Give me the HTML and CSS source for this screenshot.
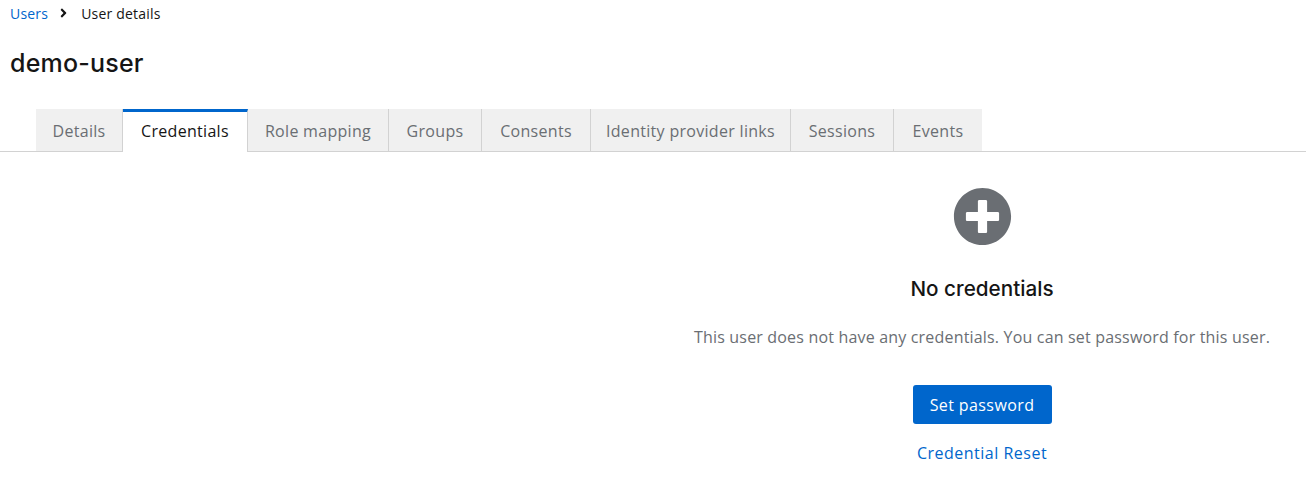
FILE: index.html
```html
<!DOCTYPE html>
<html lang="en">
<head>
<meta charset="utf-8">
<title>demo-user</title>
<link rel="stylesheet" href="styles.css">
</head>
<body>
<nav class="crumbs">
  <a class="crumb-link" href="#">Users</a>
  <svg class="crumb-sep" viewBox="0 0 256 512" aria-hidden="true"><path d="M224.3 273l-136 136c-9.4 9.4-24.6 9.4-33.9 0l-22.6-22.6c-9.4-9.4-9.4-24.6 0-33.9l96.4-96.4-96.4-96.4c-9.4-9.4-9.4-24.6 0-33.9L54.3 103c9.4-9.4 24.6-9.4 33.9 0l136 136c9.500 9.400 9.500 24.600.1 34z"/></svg>
  <span class="crumb-current">User details</span>
</nav>
<h1 class="title">demo-user</h1>
<div class="tabs">
  <a class="tab" href="#">Details</a>
  <a class="tab active" href="#">Credentials</a>
  <a class="tab" href="#">Role mapping</a>
  <a class="tab" href="#">Groups</a>
  <a class="tab" href="#">Consents</a>
  <a class="tab" href="#">Identity provider links</a>
  <a class="tab" href="#">Sessions</a>
  <a class="tab" href="#">Events</a>
</div>
<main class="panel">
  <section class="empty">
    <svg class="empty-icon" viewBox="0 0 512 512" aria-hidden="true"><path d="M256 8C119 8 8 119 8 256s111 248 248 248 248-111 248-248S393 8 256 8zm144 276c0 6.600-5.400 12-12 12h-92v92c0 6.600-5.400 12-12 12h-56c-6.600 0-12-5.400-12-12v-92h-92c-6.600 0-12-5.400-12-12v-56c0-6.600 5.400-12 12-12h92v-92c0-6.600 5.400-12 12-12h56c6.600 0 12 5.400 12 12v92h92c6.600 0 12 5.400 12 12v56z"/></svg>
    <h2 class="empty-title">No credentials</h2>
    <p class="empty-text">This user does not have any credentials. You can set password for this user.</p>
    <button class="primary" type="button">Set password</button>
    <a class="link" href="#">Credential Reset</a>
  </section>
</main>
</body>
</html>
```
FILE: styles.css
```css
* { box-sizing: border-box; }
html, body { margin: 0; padding: 0; }
body {
  background: #fff;
  color: #151515;
  font-family: "Open Sans", "Liberation Sans", sans-serif;
  font-size: 16px;
  overflow: hidden;
}
a { text-decoration: none; }
.crumbs {
  display: flex;
  align-items: center;
  height: 26px;
  padding-left: 10px;
  font-size: 14px;
  letter-spacing: 0.2px;
}
.crumb-link { color: #06c; }
.crumb-sep { width: 7px; height: 14px; margin: 0 14px 0 12px; fill: #151515; }
.crumb-current { color: #151515; }
.title {
  margin: 0;
  padding: 19px 0 0 10px;
  height: 83px;
  font-family: "Inter", sans-serif;
  font-size: 25px;
  line-height: 36px;
  font-weight: 500;
  letter-spacing: 0.2px;
}
.tabs {
  display: grid;
  grid-template-columns: 87px 125px 141px 93px 109px 200px 103px 88px;
  height: 43px;
  padding-left: 36px;
  border-bottom: 1px solid #d2d2d2;
}
.tab {
  display: flex;
  align-items: center;
  justify-content: center;
  height: 43px;
  padding-top: 1px;
  background: #f0f0f0;
  color: #6a6e73;
  border-right: 1px solid #d2d2d2;
  border-bottom: 1px solid #d2d2d2;
  letter-spacing: 0.3px;
}
.tab:last-child { border-right: 0; }
.tab.active {
  background: #fff;
  color: #151515;
  border-top: 3px solid #06c;
  border-bottom: 0;
  padding-top: 0;
  padding-bottom: 3px;
}
.panel {
  display: flex;
  justify-content: flex-end;
  padding-right: 36px;
}
.empty {
  display: flex;
  flex-direction: column;
  align-items: center;
  width: 576px;
  padding-top: 35px;
}
.empty-icon { width: 59px; height: 59px; fill: #6a6e73; }
.empty-title {
  margin: 28px 0 0;
  font-family: "Inter", sans-serif;
  font-size: 20.7px;
  line-height: 30px;
  font-weight: 500;
  color: #151515;
}
.empty-text {
  margin: 21px 0 0;
  color: #6a6e73;
  line-height: 24px;
  white-space: nowrap;
  letter-spacing: 0.18px;
}
.primary {
  margin-top: 36px;
  width: 139px;
  height: 39px;
  border: 0;
  border-radius: 3px;
  background: #06c;
  color: #fff;
  font: inherit;
  letter-spacing: 0.4px;
}
.link { margin-top: 17px; color: #06c; line-height: 24px; letter-spacing: 0.5px; }
```
